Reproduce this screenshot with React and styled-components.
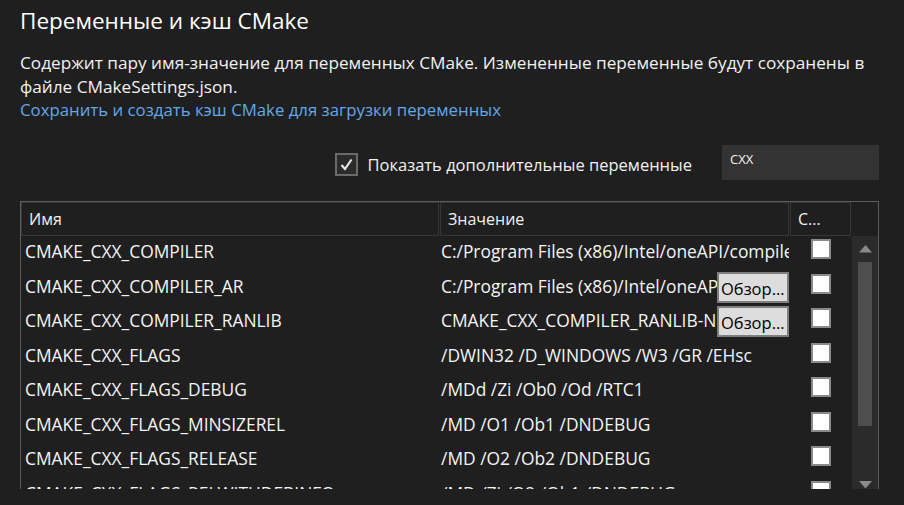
import React from "react";
import styled, { createGlobalStyle } from "styled-components";

const GlobalStyle = createGlobalStyle`
  html, body {
    margin: 0;
    padding: 0;
    background: #1f1f1f;
  }
  body {
    font-family: "Open Sans", "Noto Sans", sans-serif;
    color: #f1f1f1;
  }
`;

const Page = styled.div`
  width: 904px;
  height: 505px;
  box-sizing: border-box;
  padding: 0 10px 0 20px;
  overflow: hidden;
  background: #1f1f1f;
`;

const Title = styled.h1`
  margin: 0;
  padding-top: 5px;
  font-size: 22.5px;
  font-weight: 400;
  line-height: 32px;
  color: #ffffff;
`;

const Description = styled.p`
  margin: 14px 0 0;
  font-size: 17.2px;
  line-height: 23.5px;
  color: #f1f1f1;
`;

const Link = styled.a`
  display: block;
  font-size: 16.8px;
  line-height: 23.5px;
  color: #62a8e8;
  text-decoration: none;
  cursor: pointer;
`;

const Options = styled.div`
  display: flex;
  align-items: flex-start;
  justify-content: flex-end;
  height: 35px;
  margin: 23px 15px 0 0;
`;

const CheckLabel = styled.label`
  display: flex;
  align-items: center;
  gap: 10px;
  margin-top: 8px;
  font-size: 16.5px;
  color: #f1f1f1;
`;

const OptionBox = styled.span`
  display: flex;
  align-items: center;
  justify-content: center;
  box-sizing: border-box;
  width: 23px;
  height: 23px;
  border: 2px solid #6b6b6b;
  background: #2b2b2b;
`;

const Search = styled.input`
  box-sizing: border-box;
  width: 157px;
  height: 35px;
  margin-left: 30px;
  padding: 0 8px 6px;
  border: none;
  outline: none;
  background: #333333;
  color: #f1f1f1;
  font-family: inherit;
  font-size: 13px;
`;

const Table = styled.div`
  margin: 21px 15px 0 0;
  height: 287px;
  border: 1px solid #5c5c5c;
  border-bottom: none;
  overflow: hidden;
`;

const Header = styled.div`
  display: grid;
  grid-template-columns: 418px 349px 61px 1fr;
  column-gap: 1px;
  height: 34px;
`;

const HeaderCell = styled.div`
  display: flex;
  align-items: center;
  box-sizing: border-box;
  padding-left: 7px;
  border: 1px solid #363636;
  background: #1f1f1f;
  font-size: 16px;
  white-space: nowrap;
  overflow: hidden;
`;

const Filler = styled.div`
  background: #1f1f1f;
`;

const Body = styled.div`
  display: flex;
`;

const Rows = styled.div`
  width: 831px;
`;

const Row = styled.div`
  display: grid;
  grid-template-columns: 416px 352px 63px;
  height: 34.5px;
  align-items: center;
  font-size: 17.4px;
  color: #f4f4f4;
`;

const NameCell = styled.div`
  padding: 0 0 3px 4px;
  white-space: nowrap;
  overflow: hidden;
`;

const ValueCell = styled.div`
  position: relative;
  height: 100%;
  display: flex;
  align-items: center;
  padding: 0 0 3px 4px;
  box-sizing: border-box;
  white-space: nowrap;
  overflow: hidden;
`;

const BrowseButton = styled.button`
  position: absolute;
  top: 1.5px;
  right: 0;
  width: 72px;
  height: 31px;
  box-sizing: border-box;
  padding: 2px 0 0 2px;
  border: 2px solid #7f7f7f;
  background: #dddddd;
  color: #000000;
  font-family: inherit;
  font-size: 16.5px;
  text-align: left;
  white-space: nowrap;
  overflow: hidden;
`;

const CheckCell = styled.div`
  display: flex;
  justify-content: center;
  padding-bottom: 7px;
`;

const RowBox = styled.span`
  display: block;
  box-sizing: border-box;
  width: 20px;
  height: 20px;
  border: 2px solid #8a8a8a;
  background: #ffffff;
`;

const Scrollbar = styled.div`
  display: flex;
  flex-direction: column;
  width: 26px;
  height: 262px;
  background: #2b2b2b;
`;

const ArrowButton = styled.div`
  display: flex;
  align-items: center;
  justify-content: center;
  height: ${(p) => p.$h}px;
`;

const Thumb = styled.div`
  width: 14px;
  height: 164px;
  margin-left: 6px;
  background: #4e4e4e;
`;

const Track = styled.div`
  flex: 1;
`;

const rows = [
  { name: "CMAKE_CXX_COMPILER", value: "C:/Program Files (x86)/Intel/oneAPI/compiler/latest/windows/bin/icx.exe" },
  { name: "CMAKE_CXX_COMPILER_AR", value: "C:/Program Files (x86)/Intel/oneAPI/compiler/latest/windows/bin/llvm-ar.exe", browse: true },
  { name: "CMAKE_CXX_COMPILER_RANLIB", value: "CMAKE_CXX_COMPILER_RANLIB-NOTFOUND", browse: true },
  { name: "CMAKE_CXX_FLAGS", value: "/DWIN32 /D_WINDOWS /W3 /GR /EHsc" },
  { name: "CMAKE_CXX_FLAGS_DEBUG", value: "/MDd /Zi /Ob0 /Od /RTC1" },
  { name: "CMAKE_CXX_FLAGS_MINSIZEREL", value: "/MD /O1 /Ob1 /DNDEBUG" },
  { name: "CMAKE_CXX_FLAGS_RELEASE", value: "/MD /O2 /Ob2 /DNDEBUG" },
  { name: "CMAKE_CXX_FLAGS_RELWITHDEBINFO", value: "/MD /Zi /O2 /Ob1 /DNDEBUG" },
];

function App() {
  return (
    <>
      <GlobalStyle />
      <Page>
        <Title>Переменные и кэш CMake</Title>
        <Description>
          Содержит пару имя-значение для переменных CMake. Измененные переменные будут сохранены в
          файле CMakeSettings.json.
          <Link>Сохранить и создать кэш CMake для загрузки переменных</Link>
        </Description>

        <Options>
          <CheckLabel>
            <OptionBox>
              <svg width="15" height="15" viewBox="0 0 15 15">
                <polyline
                  points="2.5,8 6,12 12.5,2.5"
                  fill="none"
                  stroke="#e6e6e6"
                  strokeWidth="2.2"
                />
              </svg>
            </OptionBox>
            Показать дополнительные переменные
          </CheckLabel>
          <Search defaultValue="CXX" />
        </Options>

        <Table>
          <Header>
            <HeaderCell>Имя</HeaderCell>
            <HeaderCell>Значение</HeaderCell>
            <HeaderCell>С...</HeaderCell>
            <Filler />
          </Header>
          <Body>
            <Rows>
              {rows.map((r) => (
                <Row key={r.name}>
                  <NameCell>{r.name}</NameCell>
                  <ValueCell>
                    {r.value}
                    {r.browse && <BrowseButton>Обзор...</BrowseButton>}
                  </ValueCell>
                  <CheckCell>
                    <RowBox />
                  </CheckCell>
                </Row>
              ))}
            </Rows>
            <Scrollbar>
              <ArrowButton $h={26}>
                <svg width="13" height="8" viewBox="0 0 13 8">
                  <polygon points="0,7.5 6.5,0 13,7.5" fill="#8a8a8a" />
                </svg>
              </ArrowButton>
              <Thumb />
              <Track />
              <ArrowButton $h={25}>
                <svg width="13" height="8" viewBox="0 0 13 8">
                  <polygon points="0,0 6.5,7.5 13,0" fill="#8a8a8a" />
                </svg>
              </ArrowButton>
            </Scrollbar>
          </Body>
        </Table>
      </Page>
    </>
  );
}

export default App;
